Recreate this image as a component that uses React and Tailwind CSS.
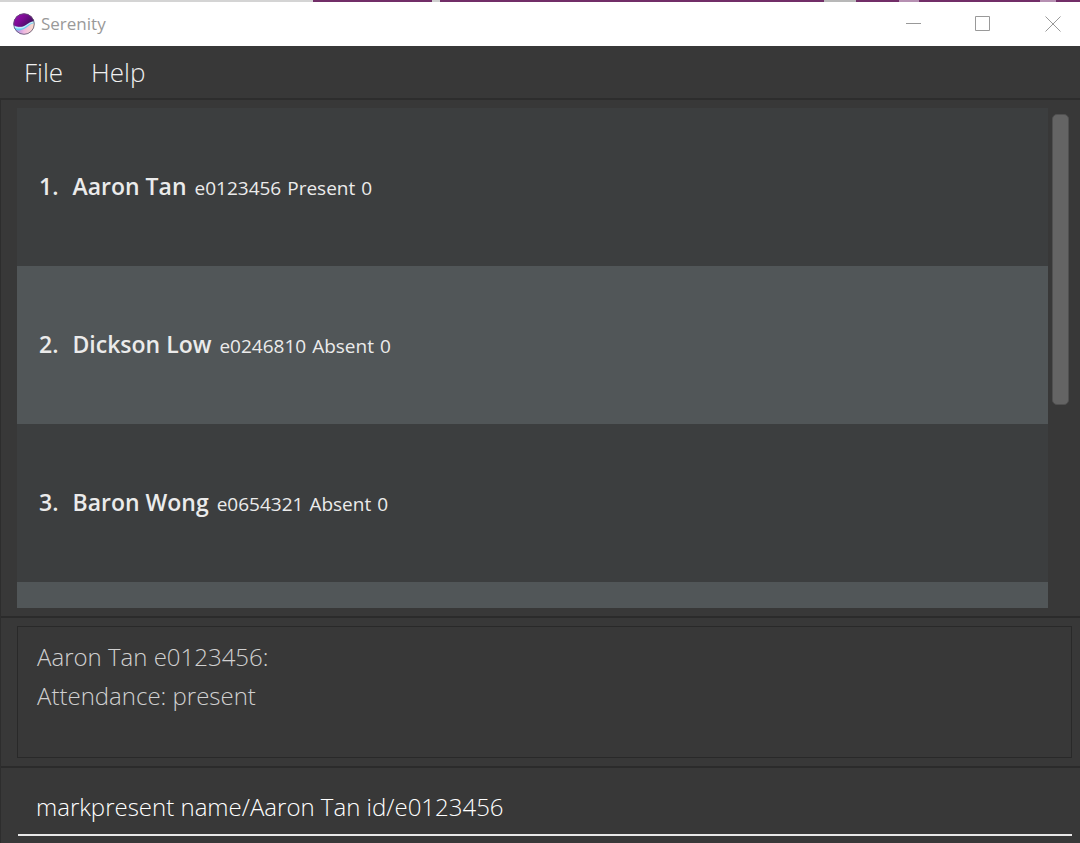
import React, { useState } from "react";

const students = [
  { name: "Aaron Tan", id: "e0123456", status: "Present", score: 0 },
  { name: "Dickson Low", id: "e0246810", status: "Absent", score: 0 },
  { name: "Baron Wong", id: "e0654321", status: "Absent", score: 0 },
];

function Logo() {
  return (
    <svg className="size-[22px] shrink-0" viewBox="0 0 22 22" aria-hidden="true">
      <defs>
        <clipPath id="logo-disc">
          <circle cx="11" cy="11" r="10.5" />
        </clipPath>
        <linearGradient id="logo-sky" x1="0" y1="0" x2="1" y2="0.6">
          <stop offset="0" stopColor="#a010b8" />
          <stop offset="0.5" stopColor="#7c0c94" />
          <stop offset="1" stopColor="#3c1258" />
        </linearGradient>
        <linearGradient id="logo-sand" x1="0" y1="0" x2="1" y2="0">
          <stop offset="0" stopColor="#8a7ae0" />
          <stop offset="0.5" stopColor="#f0b8e0" />
          <stop offset="1" stopColor="#fbe3c8" />
        </linearGradient>
      </defs>
      <g clipPath="url(#logo-disc)">
        <rect width="22" height="22" fill="url(#logo-sand)" />
        <path d="M0 12C4 15 8 15 12 12S18 8 22 8V10C18 10 15 14 11 16S3 18 0 15Z" fill="#6ccdf2" />
        <path d="M0 12C4 15 8 14.500 12 12.500S18 8 22 8V9.500C18 9.500 15 12 12 14S4 16 0 14Z" fill="#c4f0fa" />
        <path d="M0 0H22V8C18 8 15 10.500 12 12.500S4 14 0 12Z" fill="url(#logo-sky)" />
      </g>
      <circle cx="11" cy="11" r="10.300" fill="none" stroke="#5d5470" strokeWidth="0.800" />
    </svg>
  );
}

function TitleBar() {
  return (
    <header className="flex h-11 shrink-0 items-center justify-between bg-white pl-[13px] text-[#999999]">
      <div className="flex items-center gap-[6px]">
        <Logo />
        <h1 className="text-[17px] leading-6">Serenity</h1>
      </div>
      <div className="flex items-center gap-[54px] pr-[19px]">
        <button type="button" aria-label="Minimize">
          <svg className="size-4" viewBox="0 0 16 16" fill="none" stroke="currentColor">
            <path d="M1 7.500H16" />
          </svg>
        </button>
        <button type="button" aria-label="Maximize">
          <svg className="size-4" viewBox="0 0 16 16" fill="none" stroke="currentColor">
            <path d="M0.500 0.500H14.500V14.500H0.500Z" />
          </svg>
        </button>
        <button type="button" aria-label="Close">
          <svg className="size-4" viewBox="0 0 16 16" fill="none" stroke="currentColor">
            <path d="M0.500 0.500L15.500 15.500M15.500 0.500L0.500 15.500" />
          </svg>
        </button>
      </div>
    </header>
  );
}

export default function App() {
  const [command, setCommand] = useState("markpresent name/Aaron Tan id/e0123456");
  return (
    <div className="flex h-screen flex-col bg-[#383838] font-['Open_Sans','Noto_Sans',sans-serif]">
      <div className="flex h-[2px] shrink-0" aria-hidden="true">
        <div className="w-[29%] bg-[#d4d4d4]" />
        <div className="w-[11%] bg-[#722e68]" />
        <div className="w-2 bg-[#cfcfcf]" />
        <div className="flex-1 bg-[#722e68]" />
        <div className="w-8 bg-[#b8b8b8]" />
        <div className="w-[43px] bg-[#722e68]" />
        <div className="w-5 bg-[#b690b2]" />
        <div className="w-[121px] bg-[#722e68]" />
        <div className="w-4 bg-[#b690b2]" />
        <div className="w-6 bg-[#722e68]" />
      </div>
      <TitleBar />
      <nav className="flex h-[52px] shrink-0 items-center gap-7 px-6 text-[26px] font-light text-[#f0f0f0]">
        <button type="button">File</button>
        <button type="button">Help</button>
      </nav>
      <main className="flex min-h-0 flex-1 flex-col border-l border-t-2 border-[#2d2d2d]">
        <section className="flex min-h-0 flex-1 gap-1 py-2 pr-[11px] pl-4" aria-label="Students">
          <ol className="min-h-0 flex-1 overflow-hidden">
            {students.map((s, i) => (
              <li
                key={s.id}
                className="flex h-[158px] items-baseline px-[22px] pt-[62px] text-[#ebebeb] odd:bg-[#3c3e3f] even:bg-[#515658]"
              >
                <span className="mr-[14px] text-[23px] leading-8 font-semibold">{i + 1}.</span>
                <span className="mr-2 text-[23px] leading-8 font-semibold">{s.name}</span>
                <span className="flex gap-[6px] text-[19px] leading-8">
                  <span>{s.id}</span>
                  <span>{s.status}</span>
                  <span>{s.score}</span>
                </span>
              </li>
            ))}
            <li className="h-[158px] bg-[#515658]" aria-hidden="true" />
          </ol>
          <div className="w-[17px] pt-[6px]" aria-hidden="true">
            <div className="h-[291px] rounded-[5px] border border-[#505050] bg-[#646464]" />
          </div>
        </section>
        <section className="border-t-2 border-[#2b2b2b] py-2 pr-2 pl-4" aria-label="Result">
          <output className="block h-[132px] border border-[#292929] px-[19px] py-[10px] text-2xl leading-[39px] font-light text-[#d0d0d0]">
            <p>Aaron Tan e0123456:</p>
            <p>Attendance: present</p>
          </output>
        </section>
        <section className="border-t-2 border-[#2b2b2b] pt-[10px] pr-2 pb-[7px] pl-[17px]">
          <input
            type="text"
            aria-label="Command"
            value={command}
            onChange={(e) => setCommand(e.target.value)}
            className="block h-[58px] w-full border-b-2 border-[#e8e8e8] bg-transparent px-[18px] text-2xl font-light text-white outline-none"
          />
        </section>
      </main>
    </div>
  );
}
